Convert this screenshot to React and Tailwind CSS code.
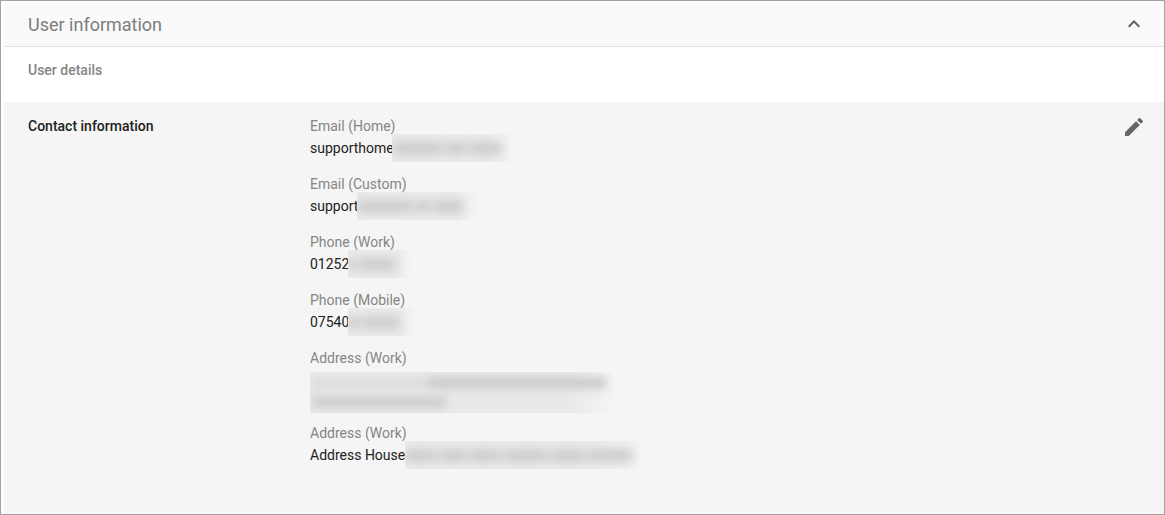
import React from 'react';

// redacted stretch of text: soft grey smudges clipped to a box that fades out to the right
function Redacted({ w, bars = [], className = '' }) {
  return (
    <span
      className={`-my-[3px] inline-block h-[28px] overflow-hidden bg-gradient-to-r from-[#ebebeb] from-80% to-[#f5f5f5] align-top ${className}`}
      style={{ width: w }}
    >
      <span className="flex h-full items-center gap-[3px] blur-[5px]">
        {bars.map((b, i) => (
          <span key={i} className="h-[13px] shrink-0 bg-[#cdcdcd]" style={{ width: b }} />
        ))}
      </span>
    </span>
  );
}

const CONTACTS = [
  { label: 'Email (Home)', text: 'supporthome', w: 122, bars: [50, 20, 34], offset: '-ml-[2px]' },
  { label: 'Email (Custom)', text: 'support', w: 122, bars: [56, 14, 30], offset: '-ml-[1px]' },
  { label: 'Phone (Work)', text: '01252', w: 64, bars: [8, 36], offset: '-ml-[1px]' },
  { label: 'Phone (Mobile)', text: '07540', w: 68, bars: [12, 36], offset: '-ml-[1px]' },
];

export default function App() {
  return (
    <div className="h-[515px] w-[1165px] overflow-hidden border border-[#a3a3a3] bg-white pl-[3px] font-['Roboto',sans-serif] text-[14px]">
      <div className="flex h-[46px] items-center justify-between border-b border-[#e3e3e3] bg-[#fafafa] pl-[24px] pr-[18px] pt-[2px]">
        <h1 className="text-[18px] text-[#7d7d7d]">User information</h1>
        <svg className="-mt-[2px]" width="24" height="24" viewBox="0 0 24 24" fill="#5f5f5f">
          <path d="M12 8l-6 6 1.41 1.41L12 10.83l4.59 4.58L18 14z" />
        </svg>
      </div>

      <div className="h-[55px] pl-[24px] pt-[14px] font-medium leading-[18px] text-[#858585]">User details</div>

      <div className="flex h-[412px] bg-[#f5f5f5] pl-[24px] pr-[18px] pt-[13px]">
        <div className="w-[282px] shrink-0 font-medium leading-[22px] text-[#212121]">Contact information</div>
        <div className="flex-1 leading-[22px]">
          {CONTACTS.map((c) => (
            <div key={c.label} className="mb-[14px]">
              <div className="text-[#858585]">{c.label}</div>
              <div className="flex text-[#212121]">
                {c.text}
                <Redacted w={c.w} bars={c.bars} className={c.offset} />
              </div>
            </div>
          ))}
          <div className="mb-[9px]">
            <div className="text-[#858585]">Address (Work)</div>
            <div className="mt-[3px] h-[41px] w-[305px] overflow-hidden bg-gradient-to-r from-[#e9e9e9] from-85% to-[#f5f5f5]">
              <div className="flex h-[20px] items-center pl-[2px] pt-[2px] blur-[4px]">
                <span className="h-[12px] w-[116px] shrink-0 bg-[#dcdedc]" />
                <span className="h-[12px] w-[178px] shrink-0 bg-[#cccccc]" />
              </div>
              <div className="flex h-[20px] items-center pl-[2px] blur-[4px]">
                <span className="h-[12px] w-[134px] shrink-0 bg-[#cfcfcf]" />
              </div>
            </div>
          </div>
          <div>
            <div className="text-[#858585]">Address (Work)</div>
            <div className="flex text-[#212121]">
              Address House
              <Redacted w={240} bars={[32, 26, 32, 44, 34, 44]} />
            </div>
          </div>
        </div>
        <svg className="shrink-0" width="24" height="24" viewBox="0 0 24 24" fill="#666666">
          <path d="M3 17.25V21h3.75L17.81 9.94l-3.75-3.75L3 17.25zM20.71 7.04a1 1 0 0 0 0-1.41l-2.34-2.34a1 1 0 0 0-1.41 0l-1.83 1.83 3.75 3.75 1.83-1.83z" />
        </svg>
      </div>
    </div>
  );
}
